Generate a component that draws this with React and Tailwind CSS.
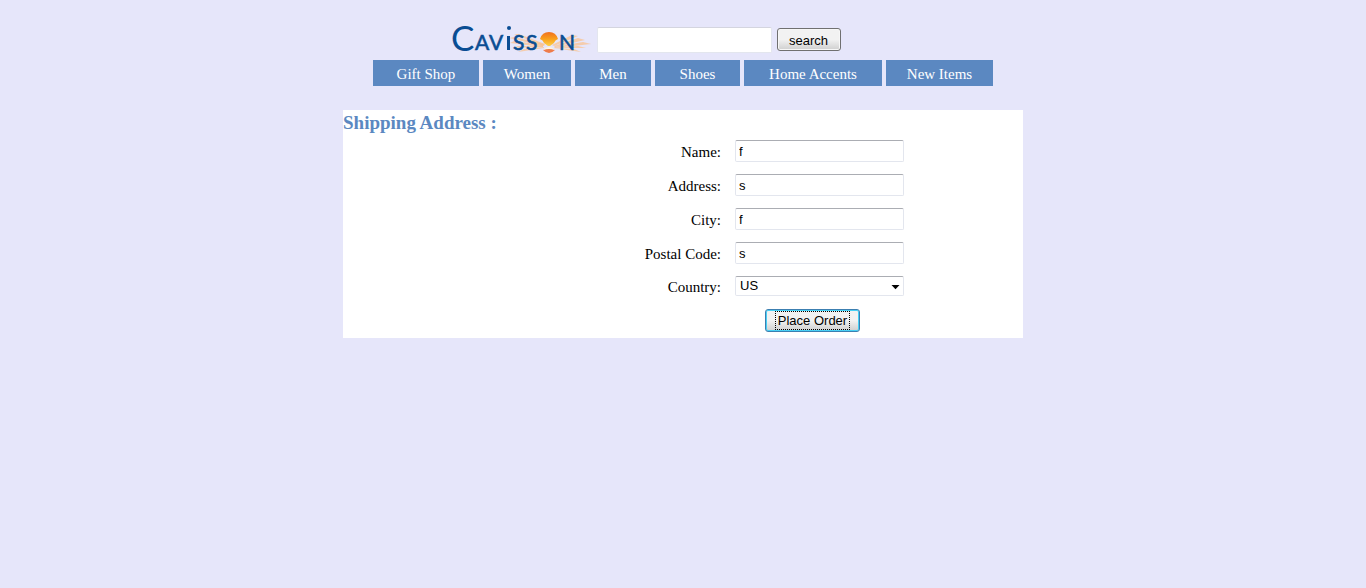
const TABS = [
  { label: 'Gift Shop', width: 'w-[106px]' },
  { label: 'Women', width: 'w-[88px]' },
  { label: 'Men', width: 'w-[76px]' },
  { label: 'Shoes', width: 'w-[85px]' },
  { label: 'Home Accents', width: 'w-[138px]' },
  { label: 'New Items', width: 'w-[107px]' },
];

const FIELDS = [
  { id: 'name', label: 'Name:', value: 'f' },
  { id: 'address', label: 'Address:', value: 's' },
  { id: 'city', label: 'City:', value: 'f' },
  { id: 'postal', label: 'Postal Code:', value: 's' },
];

const BOX =
  'w-[169px] rounded-[2px] border border-[#e3e6ee] border-t-[#abadb3] bg-white font-["Liberation_Sans",Arial,sans-serif] text-[13px] text-black';

function Logo() {
  return (
    <svg
      className="overflow-visible"
      width="140"
      height="30"
      viewBox="0 0 140 30"
      role="img"
      aria-label="Cavisson"
    >
      <defs>
        <linearGradient id="sun" x1="0" y1="0" x2="0" y2="1">
          <stop offset="0" stopColor="#f0701f" />
          <stop offset="0.5" stopColor="#f9a01b" />
          <stop offset="1" stopColor="#fdd04a" />
        </linearGradient>
      </defs>
      <g fill="#fbc08a" fillOpacity="0.7">
        <path d="M92 21 L62 9 L67 9 L93 19Z" />
        <path d="M91 21 L57 13 L62 12 L92 19Z" />
        <path d="M91 22 L58 18 L62 16 L91 20Z" />
        <path d="M91 22 L60 23 L66 21 L91 21Z" />
        <path d="M92 23 L66 27 L72 24 L92 22Z" />
        <path d="M100 20 L120 10 L126 11 L102 21Z" />
        <path d="M102 21 L126 13 L133 15 L103 22Z" />
        <path d="M102 22 L131 17 L139 19 L103 23Z" />
        <path d="M102 23 L126 21 L134 23Z" />
        <path d="M101 23 L122 24 L129 27Z" />
      </g>
      <path d="M88 14 Q90 7 97 7 Q104 7 106 14 Q103 15 102 18 L98 21 L96 21 L92 18 Q91 15 88 14Z" fill="url(#sun)" />
      <path d="M91 25 Q97 22 103 25 Q100 28 97 28 Q94 28 91 25Z" fill="#ee7c4b" />
      <path d="M91 25 Q97 19 103 25 Q97 23 91 25Z" fill="#fff6df" />
      <g fill="#0a4d93" className='font-["Lato",sans-serif]'>
        <text x="-1" y="26" fontSize="35">
          C
        </text>
        <g fontSize="21" stroke="#0a4d93" strokeWidth="0.6">
          <text x="23" y="25">A</text>
          <text x="37" y="25">V</text>
          <text x="61" y="25">S</text>
          <text x="74" y="25">S</text>
          <text x="107" y="25">N</text>
        </g>
        <rect x="55" y="11" width="3" height="14" />
        <circle cx="57" cy="3" r="2" />
      </g>
    </svg>
  );
}

export default function App() {
  return (
    <div className='min-h-screen bg-[#e6e6fa] pt-[25px] font-["Liberation_Serif","Times_New_Roman",serif] text-[15px] text-black'>
      <header className="flex flex-col items-center">
        <form className="mr-[74px] flex items-center" onSubmit={(e) => e.preventDefault()}>
          <a href="#home" className="mr-[5px] block">
            <Logo />
          </a>
          <input
            type="text"
            aria-label="Search products"
            className="mr-[5px] h-[26px] w-[175px] rounded-[2px] border border-[#e3e6ee] border-t-[#d4d5df] bg-white px-1"
          />
          <button
            type="submit"
            className='mb-0.5 h-[23px] w-[64px] rounded-[3px] border border-[#707070] bg-linear-to-b from-[#f2f2f2] from-50% to-[#cfcfcf] to-100% pt-0.5 font-["Liberation_Sans",Arial,sans-serif] text-[13px] leading-5 shadow-[inset_0_0_0_1px_#f7f7f7]'
          >
            search
          </button>
        </form>
        <nav className="mt-[5px] flex gap-1">
          {TABS.map((tab) => (
            <a
              key={tab.label}
              href="#"
              className={`${tab.width} bg-[#5b88c1] pt-1 pb-0.5 text-center leading-5 text-white`}
            >
              {tab.label}
            </a>
          ))}
        </nav>
      </header>

      <main className="mx-auto mt-6 max-w-[680px] bg-white pb-1.5">
        <h1 className="text-[19px] leading-[26px] font-bold text-[#5b88c1]">Shipping Address :</h1>
        <form className="mt-1 mr-[119px]" onSubmit={(e) => e.preventDefault()}>
          {FIELDS.map((f) => (
            <div key={f.id} className="mb-3 flex items-center justify-end gap-3.5">
              <label htmlFor={f.id} className="pt-0.5 leading-5">
                {f.label}
              </label>
              <input id={f.id} type="text" defaultValue={f.value} className={`${BOX} h-[22px] px-[3px]`} />
            </div>
          ))}
          <div className="mb-[13px] flex items-center justify-end gap-3.5">
            <label htmlFor="country" className="pt-0.5 leading-[18px]">
              Country:
            </label>
            <div className="relative flex">
              <select id="country" defaultValue="US" className={`${BOX} h-5 appearance-none pl-1 leading-[18px]`}>
                <option>US</option>
              </select>
              <svg
                className="pointer-events-none absolute top-[9px] right-1"
                width="9"
                height="5"
                viewBox="0 0 9 5"
                aria-hidden="true"
              >
                <path d="M0.5 0h8L4.5 4.2z" fill="#000" />
              </svg>
            </div>
          </div>
          <div className="flex justify-end pr-11">
            <button
              type="submit"
              className='flex h-[23px] w-[95px] items-center justify-center rounded-[3px] border border-[#3c7fb1] bg-linear-to-b from-[#f2f2f2] from-50% to-[#cfcfcf] to-100% font-["Liberation_Sans",Arial,sans-serif] text-[13px] shadow-[inset_0_0_0_1px_#48d0f5]'
            >
              <span className="border border-dotted border-black px-0.5 leading-[17px]">Place Order</span>
            </button>
          </div>
        </form>
      </main>
    </div>
  );
}
